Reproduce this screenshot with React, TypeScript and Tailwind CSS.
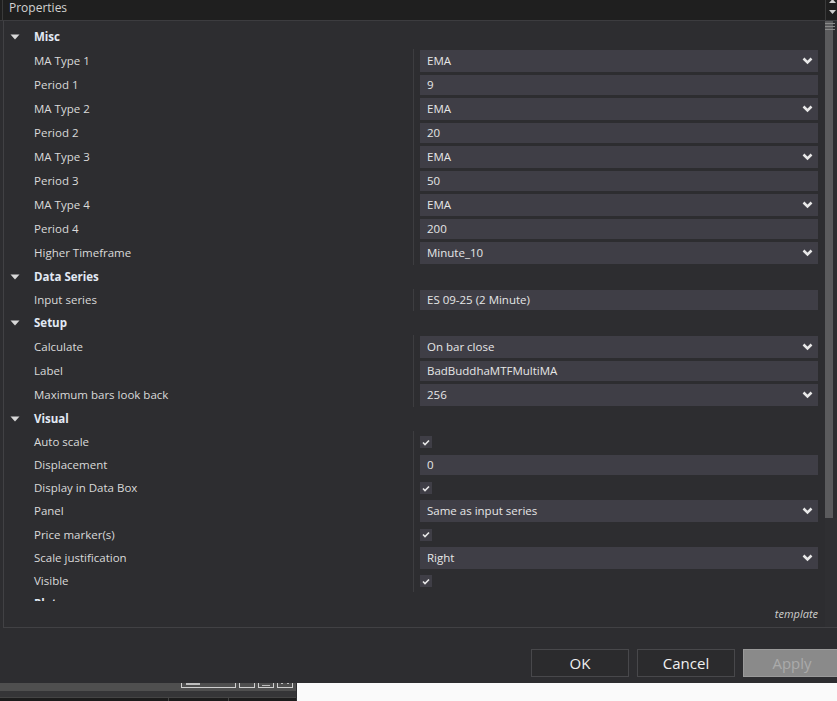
type Row =
  | { kind: "cat"; label: string; h: string }
  | { kind: "select" | "text" | "check"; label: string; value?: string; h: string };

const rows: Row[] = [
  { kind: "cat", label: "Misc", h: "h-[24px]" },
  { kind: "select", label: "MA Type 1", value: "EMA", h: "h-[24px]" },
  { kind: "text", label: "Period 1", value: "9", h: "h-[24px]" },
  { kind: "select", label: "MA Type 2", value: "EMA", h: "h-[24px]" },
  { kind: "text", label: "Period 2", value: "20", h: "h-[24px]" },
  { kind: "select", label: "MA Type 3", value: "EMA", h: "h-[24px]" },
  { kind: "text", label: "Period 3", value: "50", h: "h-[24px]" },
  { kind: "select", label: "MA Type 4", value: "EMA", h: "h-[24px]" },
  { kind: "text", label: "Period 4", value: "200", h: "h-[24px]" },
  { kind: "select", label: "Higher Timeframe", value: "Minute_10", h: "h-[24px]" },
  { kind: "cat", label: "Data Series", h: "h-[24px]" },
  { kind: "text", label: "Input series", value: "ES 09-25 (2 Minute)", h: "h-[22px]" },
  { kind: "cat", label: "Setup", h: "h-[24px]" },
  { kind: "select", label: "Calculate", value: "On bar close", h: "h-[24px]" },
  { kind: "text", label: "Label", value: "BadBuddhaMTFMultiMA", h: "h-[24px]" },
  { kind: "select", label: "Maximum bars look back", value: "256", h: "h-[24px]" },
  { kind: "cat", label: "Visual", h: "h-[24px]" },
  { kind: "check", label: "Auto scale", h: "h-[22px]" },
  { kind: "text", label: "Displacement", value: "0", h: "h-[24px]" },
  { kind: "check", label: "Display in Data Box", h: "h-[22px]" },
  { kind: "select", label: "Panel", value: "Same as input series", h: "h-[24px]" },
  { kind: "check", label: "Price marker(s)", h: "h-[23px]" },
  { kind: "select", label: "Scale justification", value: "Right", h: "h-[24px]" },
  { kind: "check", label: "Visible", h: "h-[22px]" },
  { kind: "cat", label: "Plots", h: "h-[24px]" },
];

function Chevron() {
  return (
    <svg width="11" height="8" viewBox="0 0 11 8" className="shrink-0">
      <polyline points="1.5,1.5 5.5,5.5 9.5,1.5" fill="none" stroke="#e8e8e8" strokeWidth="2.5" />
    </svg>
  );
}

function Value({ row }: { row: Row }) {
  if (row.kind === "check") {
    return (
      <div className="flex h-[12px] w-[12px] items-center justify-center bg-[#3f3e46]">
        <svg width="8" height="7" viewBox="0 0 8 7">
          <polyline points="1,3.5 3,5.5 7,1.5" fill="none" stroke="#e8e8e8" strokeWidth="1.6" />
        </svg>
      </div>
    );
  }
  if (row.kind === "select") {
    return (
      <div className="flex h-[22px] w-full items-center justify-between bg-[#3f3e46] pl-[7px] pr-[5px] text-[#e6e6e6]">
        <span>{row.value}</span>
        <Chevron />
      </div>
    );
  }
  return (
    <div className="flex h-[20px] w-full items-center bg-[#3f3e46] pl-[7px] text-[#e6e6e6]">
      {row.value}
    </div>
  );
}

function PropRow({ row }: { row: Row }) {
  if (row.kind === "cat") {
    return (
      <div className={`flex ${row.h} items-center`}>
        <svg width="10" height="6" viewBox="0 0 10 6" className="ml-[6px] mr-[14px]">
          <polygon points="0.5,0.5 9.5,0.5 5,5.5" fill="#d8d8d8" />
        </svg>
        <span className="font-bold text-[#e2e9f4]">{row.label}</span>
      </div>
    );
  }
  return (
    <div className={`flex ${row.h}`}>
      <div className="flex w-[409px] items-center pl-[30px] text-[#dadada]">{row.label}</div>
      <div className="flex flex-1 items-center border-l border-[#3d3d40] pl-[6px] pr-[7px]">
        <Value row={row} />
      </div>
    </div>
  );
}

export default function App() {
  return (
    <div
      className="flex h-[701px] w-[837px] flex-col overflow-hidden bg-[#2d2d30] text-[11.5px]"
      style={{ fontFamily: '"Open Sans", "Noto Sans", sans-serif' }}
    >
      {/* header */}
      <div className="flex h-[21px] shrink-0 border-b border-[#3c3c3f] bg-[#1f1f1f]">
        <div className="w-[3px] border-r border-[#3a3a3a]" />
        <div className="flex-1 pl-[6px] text-[12px] leading-[15px] text-[#d2d2d2]">Properties</div>
        <div className="flex w-[12px] flex-col items-end border-l border-[#3a3a3a] pr-[1px]">
          <svg width="7" height="4" viewBox="0 0 7 4" className="mt-[-1px]">
            <polygon points="0,4 7,4 3.5,0" fill="#cfcfcf" />
          </svg>
          <svg width="7" height="4" viewBox="0 0 7 4" className="mt-[7px]">
            <polygon points="0,0 7,0 3.5,4" fill="#cfcfcf" />
          </svg>
        </div>
      </div>

      {/* body */}
      <div className="flex h-[607px] shrink-0">
        <div className="ml-[3px] flex w-[822px] flex-col border-b border-l border-[#414144]">
          <div className="h-[580px] overflow-hidden pt-[4px]">
            {rows.map((r) => (
              <PropRow key={r.label} row={r} />
            ))}
          </div>
          <div className="flex flex-1 items-start justify-end pr-[7px] pt-[5px] text-[11px] italic text-[#cdcdcd]">
            template
          </div>
        </div>
        <div className="flex w-[12px] flex-col border-b border-[#414144]">
          <div className="flex h-[497px] w-[8px] flex-col gap-[2px] bg-[#5b5b5d] pt-[2px]">
            <div className="h-[1px] w-[10px] bg-[#8a8a8a]" />
            <div className="h-[1px] w-[10px] bg-[#8a8a8a]" />
            <div className="h-[1px] w-[10px] bg-[#8a8a8a]" />
          </div>
          <div className="flex-1 bg-[#2f2f32]" />
        </div>
      </div>

      {/* footer buttons */}
      <div className="flex h-[55px] shrink-0 items-start justify-end gap-[8px] pt-[21px] text-[15px]">
        <div className="flex h-[28px] w-[98px] items-center justify-center border border-[#48484b] bg-[#2b2b2d] text-[#f0f0f0]">
          OK
        </div>
        <div className="flex h-[28px] w-[98px] items-center justify-center border border-[#48484b] bg-[#2b2b2d] text-[#f0f0f0]">
          Cancel
        </div>
        <div className="-mr-[4px] flex h-[28px] w-[98px] shrink-0 items-center justify-center border border-[#9a9a9a] bg-[#8a8a8a] text-[#aaaaaa]">
          Apply
        </div>
      </div>

      {/* bottom strip */}
      <div className="flex h-[18px] shrink-0">
        <div className="flex w-[296px] flex-col">
          <div className="flex h-[8px] bg-[#4f4f4f]">
            <div className="ml-[181px] flex h-[5px] w-[55px] border-x border-b border-[#cfcfcf] pl-[4px]">
              <div className="h-[2px] w-[14px] bg-[#bdbdbd]" />
            </div>
            <div className="ml-[3px] h-[5px] w-[16px] border-x border-b border-[#cfcfcf]" />
            <div className="ml-[3px] flex h-[5px] w-[16px] items-end border-x border-b border-[#cfcfcf] px-[3px] pb-[1px]">
              <div className="h-[1px] w-full bg-[#bdbdbd]" />
            </div>
            <div className="ml-[3px] flex h-[5px] w-[16px] justify-between border-x border-b border-[#cfcfcf] px-[3px]">
              <div className="h-[1px] w-[2px] bg-[#bdbdbd]" />
              <div className="h-[1px] w-[2px] bg-[#bdbdbd]" />
            </div>
          </div>
          <div className="h-[6px] bg-[#353537]" />
          <div className="flex flex-1 border-t border-[#444] bg-[#1c1c1c]">
            <div className="w-[169px] border-r border-[#444]" />
            <div className="w-[60px] border-r border-[#444]" />
          </div>
        </div>
        <div className="w-[1px] bg-[#2d2d30]" />
        <div className="flex-1 bg-[#fafafa]" />
      </div>
    </div>
  );
}
